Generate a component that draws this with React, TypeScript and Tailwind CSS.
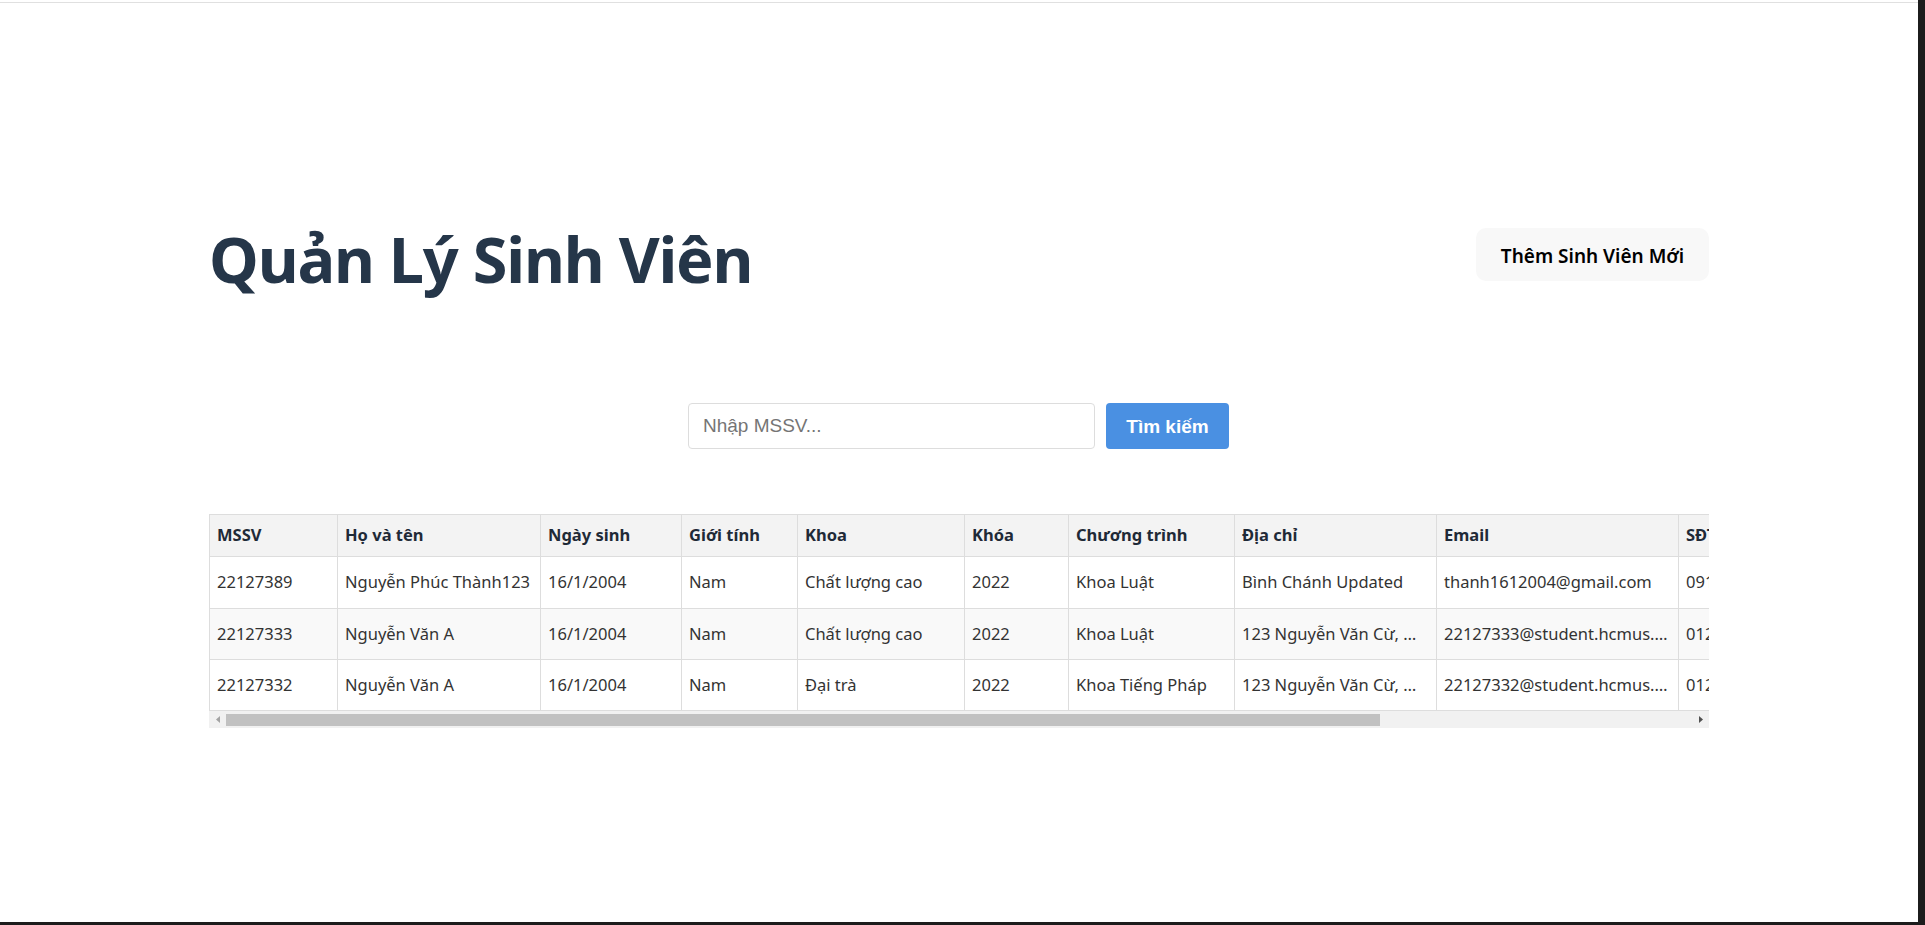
import React from "react";

type Row = {
  mssv: string;
  name: string;
  dob: string;
  gender: string;
  khoa: string;
  khoaHoc: string;
  program: string;
  address: string;
  email: string;
  phone: string;
};

const rows: Row[] = [
  {
    mssv: "22127389",
    name: "Nguyễn Phúc Thành123",
    dob: "16/1/2004",
    gender: "Nam",
    khoa: "Chất lượng cao",
    khoaHoc: "2022",
    program: "Khoa Luật",
    address: "Bình Chánh Updated",
    email: "thanh1612004@gmail.com",
    phone: "0912345678",
  },
  {
    mssv: "22127333",
    name: "Nguyễn Văn A",
    dob: "16/1/2004",
    gender: "Nam",
    khoa: "Chất lượng cao",
    khoaHoc: "2022",
    program: "Khoa Luật",
    address: "123 Nguyễn Văn Cừ, Quận 5, TP.HCM",
    email: "22127333@student.hcmus.edu.vn",
    phone: "0123456789",
  },
  {
    mssv: "22127332",
    name: "Nguyễn Văn A",
    dob: "16/1/2004",
    gender: "Nam",
    khoa: "Đại trà",
    khoaHoc: "2022",
    program: "Khoa Tiếng Pháp",
    address: "123 Nguyễn Văn Cừ, Quận 5, TP.HCM",
    email: "22127332@student.hcmus.edu.vn",
    phone: "0123456789",
  },
];

const headers = [
  "MSSV",
  "Họ và tên",
  "Ngày sinh",
  "Giới tính",
  "Khoa",
  "Khóa",
  "Chương trình",
  "Địa chỉ",
  "Email",
  "SĐT",
];

const widths = [129, 203, 141, 116, 167, 104, 166, 202, 242, 140];

export default function App() {
  return (
    <div className="w-[1925px] h-[925px] bg-[#1c1c1c] overflow-hidden">
      <div className="w-[1918px] h-[922px] bg-white flex flex-col">
        <div className="mt-[2px] h-px bg-[#e0e0e0]" />
        <div className="w-[1500px] mx-auto mt-[225px] font-['Noto_Sans',sans-serif]">
          <header className="flex items-center justify-between h-[53px]">
            <h1 className="mt-[7px] text-[63px] font-bold tracking-[-1.2px] text-[#253649] leading-none whitespace-nowrap">
              Quản Lý Sinh Viên
            </h1>
            <button className="h-[53px] w-[233px] rounded-[10px] bg-[#f8f8f8] pt-[3px] text-[19px] font-semibold text-black">
              Thêm Sinh Viên Mới
            </button>
          </header>

          <div className="mt-[122px] flex justify-center gap-[11px] pr-[1px] font-['Liberation_Sans',Arial,sans-serif]">
            <input
              placeholder="Nhập MSSV..."
              className="w-[407px] h-[46px] border border-[#dddddd] rounded-[4px] px-[14px] text-[19px] text-[#333] placeholder:text-[#757575] outline-none bg-white"
            />
            <button className="w-[123px] h-[46px] rounded-[4px] bg-[#4a90e2] pt-[3px] text-white font-bold text-[19px]">
              Tìm kiếm
            </button>
          </div>

          <div className="mt-[65px]">
            <div className="overflow-hidden">
              <table className="table-fixed w-[1610px] border-separate border-spacing-0 text-[16.5px]">
                <colgroup>
                  {widths.map((w, i) => (
                    <col key={i} style={{ width: w }} />
                  ))}
                </colgroup>
                <thead>
                  <tr className="h-[43px] bg-[#f3f3f3]">
                    {headers.map((h, i) => (
                      <th
                        key={h}
                        className={`text-left font-bold text-[#1f2a37] px-[7px] whitespace-nowrap overflow-hidden border-t border-b border-r border-[#dddddd] ${
                          i === 0 ? "border-l" : ""
                        }`}
                      >
                        {h}
                      </th>
                    ))}
                  </tr>
                </thead>
                <tbody>
                  {rows.map((r, ri) => {
                    const cells = [
                      r.mssv,
                      r.name,
                      r.dob,
                      r.gender,
                      r.khoa,
                      r.khoaHoc,
                      r.program,
                      r.address,
                      r.email,
                      r.phone,
                    ];
                    return (
                      <tr
                        key={ri}
                        className={`${ri === 0 ? "h-[52px]" : "h-[51px]"} ${
                          ri === 1 ? "bg-[#f9f9f9]" : "bg-white"
                        }`}
                      >
                        {cells.map((c, ci) => (
                          <td
                            key={ci}
                            className={`text-[#333333] px-[7px] whitespace-nowrap overflow-hidden text-ellipsis border-b border-r border-[#dddddd] ${
                              ci === 0 ? "border-l" : ""
                            }`}
                          >
                            {c}
                          </td>
                        ))}
                      </tr>
                    );
                  })}
                </tbody>
              </table>
            </div>
            <div className="flex h-[17px] bg-[#f1f1f1]">
              <div className="w-[17px] flex items-center justify-center">
                <svg width="4" height="7" viewBox="0 0 4 7">
                  <path d="M4 0 L0 3.5 L4 7 Z" fill="#a3a3a3" />
                </svg>
              </div>
              <div className="flex-1 flex pt-[3px]">
                <div className="w-[1154px] h-[12px] bg-[#c1c1c1]" />
              </div>
              <div className="w-[17px] flex items-center justify-center">
                <svg width="4" height="7" viewBox="0 0 4 7">
                  <path d="M0 0 L4 3.5 L0 7 Z" fill="#505050" />
                </svg>
              </div>
            </div>
          </div>
        </div>
      </div>
    </div>
  );
}
